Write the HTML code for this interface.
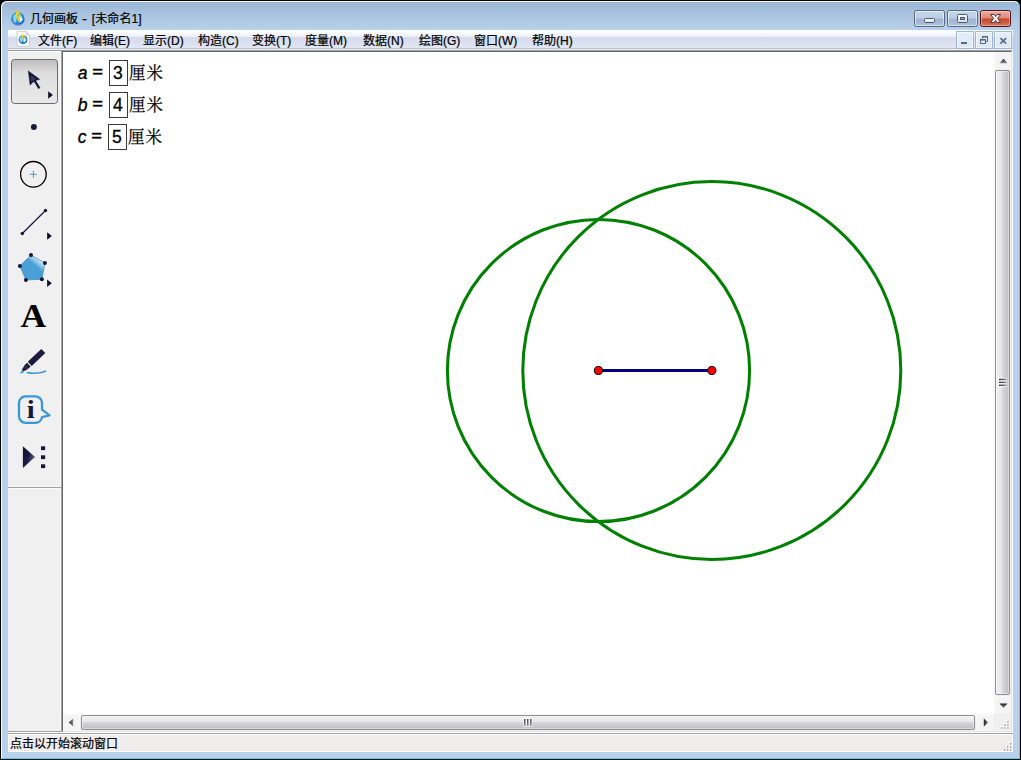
<!DOCTYPE html>
<html lang="zh-CN">
<head>
<meta charset="utf-8">
<title>几何画板 - [未命名1]</title>
<style>
*{box-sizing:border-box;margin:0;padding:0}
html,body{width:1021px;height:760px;overflow:hidden;background:#000}
body{font-family:"Liberation Sans","Noto Sans CJK SC",sans-serif;font-size:12px;color:#000;position:relative}
.abs{position:absolute}
#win{position:absolute;left:0;top:0;width:1021px;height:760px;background:#000;border-radius:7px 7px 0 0;overflow:hidden}
#frame{position:absolute;left:1px;top:1px;width:1019px;height:758px;border-radius:6px 6px 0 0;
 background:linear-gradient(#9ab6d6 0px,#a3bedc 8px,#b0c9e4 20px,#b9d1ea 30px,#b9d1ea 100%);
 }
#frame:before{content:"";position:absolute;left:0;top:0;right:0;bottom:0;border-radius:6px 6px 0 0;
 border-top:1px solid #fdfeff;border-left:1px solid #fdfeff;border-right:1px solid #3fd6f4;border-bottom:1px solid #3fd6f4}
.title{position:absolute;left:30px;top:11px;-webkit-text-stroke:0.2px #000;height:16px;line-height:16px;font-size:12px;white-space:nowrap}
/* caption buttons */
.cb{position:absolute;top:10px;height:17px;border:1px solid #5b687e;border-radius:2.5px;
 background:linear-gradient(#c4d6eb 0%,#bccfe6 48%,#9cb5d3 52%,#abc2dd 100%);box-shadow:inset 0 0 0 1px rgba(255,255,255,.55)}
.cb.close{border-color:#4d121c;background:linear-gradient(#eaa99b 0%,#dc8a78 48%,#c5452a 52%,#d7735c 100%);box-shadow:inset 0 0 0 1px rgba(255,255,255,.35)}
/* menu */
#menubar{position:absolute;left:8px;top:30px;width:1005px;height:19px;
 background:linear-gradient(#ffffff 0px,#ffffff 1px,#e9edf7 7px,#d4daec 7px,#e2e7f5 18px,#bcc2d2 18px,#bcc2d2 19px)}
.mi{position:absolute;top:33px;transform:translateY(0.5px);-webkit-text-stroke:0.2px #000;height:14px;line-height:14px;font-size:12px;white-space:nowrap}
.mdib{position:absolute;top:31px;width:18px;height:18px;border:1px solid #a3b7d0;background:linear-gradient(#e4eefa,#dbe7f6);box-shadow:inset 0 0 0 1px rgba(255,255,255,.55)}
#client{position:absolute;left:8px;top:49px;width:1005px;height:703px;background:#f0f0f0}

.tri{position:absolute;width:0;height:0;border-style:solid}
.thumbv{position:absolute;left:995px;width:15px;border:1px solid #8f8f8f;border-radius:2px;
 background:linear-gradient(90deg,#f3f3f3 0%,#e5e5e7 45%,#d7d7da 50%,#bebec3 100%);box-shadow:inset 0 0 0 1px rgba(255,255,255,.4)}
.thumbh{position:absolute;top:715px;height:15px;border:1px solid #8f8f8f;border-radius:2px;
 background:linear-gradient(#f3f3f3 0%,#e5e5e7 45%,#d7d7da 50%,#bebec3 100%);box-shadow:inset 0 0 0 1px rgba(255,255,255,.4)}
.meas{position:absolute;left:77px;height:26px;line-height:26px;font-size:17.5px;white-space:nowrap;font-family:"Liberation Sans","Noto Serif CJK SC",sans-serif}
.meas i{font-style:italic;display:inline-block;width:15px}
.meas i,.meas b,.meas .u{position:relative;top:-1px}
.meas i{-webkit-text-stroke:0.35px #000;left:0.8px}
.meas .d{position:relative;left:-0.6px;-webkit-text-stroke:0.3px #000}
.meas b{font-weight:normal;-webkit-text-stroke:0.9px #000;display:inline-block;width:17px;transform:translate(0.5px,-1.1px) scaleY(0.8)}
.meas .bx{display:inline-block;width:19px;height:26px;line-height:24px;border:1px solid #3a3a3a;padding:0;margin:0 1.5px 0 0;vertical-align:top;text-align:center}
.meas .u{font-family:"Noto Serif CJK SC","Liberation Serif",serif;font-size:16.5px;letter-spacing:1px;-webkit-text-stroke:0.25px #000;left:-0.5px}
</style>
</head>
<body>
<div id="win">
 <div id="frame"></div>
 <div class="title">几何画板</div><div class="title" style="left:81.5px;transform:scaleX(1.25);transform-origin:0 0">-</div><div class="title" style="left:91.8px;letter-spacing:0.1px">[未命名1]</div>
 <div class="cb" style="left:914px;width:31px"></div>
 <div class="cb" style="left:947px;width:31px"></div>
 <div class="cb close" style="left:980px;width:31px"></div>

 <div id="menubar"></div>
 <div class="mi" style="left:38px">文件(F)</div>
 <div class="mi" style="left:90px">编辑(E)</div>
 <div class="mi" style="left:143px">显示(D)</div>
 <div class="mi" style="left:198px">构造(C)</div>
 <div class="mi" style="left:252px">变换(T)</div>
 <div class="mi" style="left:305px">度量(M)</div>
 <div class="mi" style="left:363px">数据(N)</div>
 <div class="mi" style="left:419px">绘图(G)</div>
 <div class="mi" style="left:474px">窗口(W)</div>
 <div class="mi" style="left:532px">帮助(H)</div>
 <div class="mdib" style="left:956px"></div>
 <div class="mdib" style="left:975px"></div>
 <div class="mdib" style="left:994px"></div>


 <!-- caption & mdi glyphs, app icons -->
 <svg class="abs" style="left:0;top:0" width="1021" height="52" viewBox="0 0 1021 52">
  <defs>
   <radialGradient id="gglobe" cx="0.42" cy="0.38" r="0.65">
    <stop offset="0" stop-color="#6fd0f6"/><stop offset="0.5" stop-color="#229ae2"/><stop offset="1" stop-color="#1363bd"/>
   </radialGradient>
   <linearGradient id="gwhite" x1="0" y1="0" x2="0" y2="1"><stop offset="0" stop-color="#ffffff"/><stop offset="1" stop-color="#dcdcdc"/></linearGradient>
  </defs>
  <!-- min -->
  <rect x="924.5" y="18.5" width="10" height="4" rx="1" fill="url(#gwhite)" stroke="#4c5873" stroke-width="1"/>
  <!-- max -->
  <rect x="957.5" y="14.5" width="10" height="8" rx="1" fill="url(#gwhite)" stroke="#4c5873" stroke-width="1"/>
  <rect x="960.5" y="17.5" width="4" height="2" fill="#8fb0d6" stroke="#4c5873" stroke-width="1"/>
  <!-- close X -->
  <path d="M990.6 14.5 H994.1 L995.6 16.6 L997.1 14.5 H1000.6 L997.5 18.5 L1000.6 22.5 H997.1 L995.6 20.4 L994.1 22.5 H990.6 L993.7 18.5 Z" fill="#fafafa" stroke="#5a3440" stroke-width="1" stroke-linejoin="round"/>
  <!-- mdi min -->
  <rect x="961" y="42" width="6" height="2" fill="#5c6b80"/>
  <!-- mdi restore -->
  <path d="M982.5 38.5 V36.5 H987.5 V41.5 H986" fill="none" stroke="#5c6b80" stroke-width="1"/>
  <rect x="982" y="36" width="6" height="1.6" fill="#5c6b80"/>
  <rect x="980.5" y="39.5" width="5" height="4" fill="none" stroke="#5c6b80" stroke-width="1"/>
  <rect x="980" y="39" width="6" height="1.6" fill="#5c6b80"/>
  <!-- mdi close -->
  <path d="M1000.4 38.2 L1006.2 43.6 M1006.2 38.2 L1000.4 43.6" stroke="#5c6b80" stroke-width="1.7" fill="none"/>
  <!-- app icon -->
  <circle cx="17.9" cy="18.9" r="6.7" fill="url(#gglobe)"/>
  <path d="M12.2 21 C13.4 25.6 20.6 27 24 22.4" fill="none" stroke="#d79ad0" stroke-width="0.9" opacity=".75"/>
  <path d="M14.4 14.6 C12.6 17.4 13.2 21.4 15.4 23.6 C14.6 20.6 14.8 17.4 16.2 14.8 Z" fill="#bfeaff" opacity=".7"/>
  <path d="M19.3 15.6 L23 19.6 L19.7 23 Z" fill="#ffffff" opacity=".9"/>
  <path d="M17 11.2 L15.3 21.8 M17.4 11.6 L18.6 21.2 M17.6 11.6 L21.8 17.6" fill="none" stroke="#ffd91a" stroke-width="1.05" stroke-linecap="round"/>
  <path d="M16.9 11 L17.8 13" stroke="#f3c400" stroke-width="1.4" stroke-linecap="round"/>
  <!-- doc icon -->
  <path d="M17 31.5 H26.2 L29.5 34.8 V46.3 H17 Z" fill="#fbfbfb" stroke="#c4c6cc" stroke-width="0.8"/>
  <path d="M26.2 31.5 V34.8 H29.5" fill="#e8e8ec" stroke="#c4c6cc" stroke-width="0.7"/>
  <circle cx="23" cy="39.7" r="4.4" fill="url(#gglobe)"/>
  <path d="M20.6 37 C19.6 38.8 19.8 41.2 21.2 42.8 C20.8 40.8 21 38.8 21.8 37.2 Z" fill="#bfeaff" opacity=".7"/>
  <path d="M23.9 37.6 L26.3 40.2 L24.1 42.4 Z" fill="#ffffff" opacity=".9"/>
  <path d="M22.4 34.8 L21.3 41.6 M22.6 35 L23.4 41.4 M22.8 35 L25.6 39" fill="none" stroke="#ffd91a" stroke-width="0.85" stroke-linecap="round"/>
 </svg>
 <div id="client"></div>
 <!-- line under menu -->
 <div class="abs" style="left:8px;top:50px;width:1004px;height:1px;background:#a0a0a0"></div>
 <!-- toolbox -->
 <div class="abs" id="toolbox" style="left:8px;top:51px;width:53px;height:680px;background:#f0f0f0;border-top:1px solid #fff"></div>
 <div class="abs" style="left:60px;top:52px;width:1px;height:679px;background:#fafafa"></div>
 <div class="abs" style="left:61px;top:51px;width:1px;height:681px;background:#a0a0a0"></div>
 <div class="abs" style="left:8px;top:731px;width:54px;height:1px;background:#a0a0a0"></div>
 <div class="abs" style="left:8px;top:487px;width:53px;height:1px;background:#a0a0a0"></div>
 <!-- canvas w/ sunken edge -->
 <div class="abs" style="left:62px;top:51px;width:950px;height:681px;background:#fff;border-left:1px solid #696969;border-top:1px solid #696969;border-right:1px solid #e3e3e3;border-bottom:1px solid #e3e3e3"></div>
 <div class="abs" style="left:1012px;top:50px;width:1px;height:683px;background:#fff"></div>
 <div class="abs" style="left:8px;top:732px;width:1005px;height:1px;background:#fff"></div>
 <!-- scrollbars -->
 <div class="abs" id="vsb" style="left:994px;top:52px;width:17px;height:662px;background:linear-gradient(90deg,#fafafa 0px,#efefef 2px,#f0f0f0 100%)"></div>
 <div class="abs" id="hsb" style="left:63px;top:714px;width:931px;height:17px;background:linear-gradient(#fafafa 0px,#efefef 2px,#f0f0f0 100%)"></div>
 <div class="abs" style="left:994px;top:714px;width:17px;height:17px;background:#f0f0f0"></div>
 <!-- status bar -->
 <div class="abs" style="left:8px;top:733px;width:1005px;height:1px;background:#a0a0a0"></div>
 <div class="abs" style="left:8px;top:734px;width:1005px;height:18px;background:#f1ecec;border:1px solid #fff"></div>
 <div class="abs" style="left:10px;top:737px;height:15px;line-height:15px;font-size:12px;white-space:nowrap;-webkit-text-stroke:0.2px #000">点击以开始滚动窗口</div>

 <!-- sketch -->
 <svg class="abs" style="left:63px;top:52px" width="931" height="662" viewBox="63 52 931 662">
  <circle cx="598.5" cy="370.5" r="151.1" fill="none" stroke="#008000" stroke-width="3"/>
  <circle cx="711.8" cy="370.5" r="189" fill="none" stroke="#008000" stroke-width="3"/>
  <line x1="598.4" y1="370.5" x2="711.8" y2="370.5" stroke="#000080" stroke-width="3"/>
  <circle cx="598.4" cy="370.5" r="4.05" fill="#ff0000" stroke="#000" stroke-width="1"/>
  <circle cx="711.9" cy="370.5" r="4.05" fill="#ff0000" stroke="#000" stroke-width="1"/>
 </svg>

 <!-- toolbox icons -->
 <svg class="abs" style="left:8px;top:52px" width="53" height="440" viewBox="8 52 53 440">
  <defs>
   <linearGradient id="gsel" x1="0" y1="0" x2="0" y2="1">
    <stop offset="0" stop-color="#bdbdbd"/><stop offset="0.27" stop-color="#d9d9d9"/><stop offset="0.275" stop-color="#dedede"/><stop offset="1" stop-color="#e9e9e9"/>
   </linearGradient>
   <linearGradient id="gpoly" x1="0.9" y1="0" x2="0.45" y2="0.55">
    <stop offset="0" stop-color="#ffffff"/><stop offset="0.3" stop-color="#dcecf8"/><stop offset="0.72" stop-color="#4a9fd6"/><stop offset="1" stop-color="#4a9fd6"/>
   </linearGradient>
   <linearGradient id="gplay" x1="0" y1="0" x2="1" y2="0.6">
    <stop offset="0" stop-color="#14122f"/><stop offset="0.55" stop-color="#1c1a3f"/><stop offset="0.85" stop-color="#55547a"/><stop offset="1" stop-color="#1c1a3f"/>
   </linearGradient>
  </defs>
  <rect x="11.5" y="59.5" width="46" height="44" rx="3" ry="3" fill="url(#gsel)" stroke="#6b6b6b" stroke-width="1"/>
  <!-- arrow -->
  <path d="M28.3 70.9 L39.7 79.3 L34.4 80.9 L30.1 85.1 Z" fill="#17153a" stroke="#17153a" stroke-width="0.5" stroke-linejoin="round"/>
  <path d="M30.6 75.2 L36.6 79.2 L33.4 80.2 L31.2 82.6 Z" fill="#5d5b80" opacity=".5"/>
  <path d="M34.2 80 L39.4 88.3" stroke="#17153a" stroke-width="2.3" fill="none"/>
  <path d="M48.2 91.2 L52.9 95 L48.2 98.8 Z" fill="#0f0c2e"/>
  <!-- point -->
  <circle cx="33.9" cy="127" r="3" fill="#1a1840"/>
  <!-- circle -->
  <circle cx="33.4" cy="174.3" r="12.8" fill="none" stroke="#000" stroke-width="1.3"/>
  <path d="M29.8 174.3 H37 M33.4 170.7 V177.9" stroke="#3d8fd0" stroke-width="0.9" fill="none"/>
  <!-- line -->
  <line x1="22.3" y1="233.5" x2="45.5" y2="210.5" stroke="#17153a" stroke-width="1.2"/>
  <circle cx="22.3" cy="233.5" r="1.7" fill="#17153a"/><circle cx="45.5" cy="210.5" r="1.7" fill="#17153a"/>
  <path d="M47.1 232.2 L51.8 236 L47.1 239.8 Z" fill="#0f0c2e"/>
  <!-- polygon -->
  <path d="M31 255.1 L44.9 263 L41.9 279.3 L25.9 279.9 L19.9 266 Z" fill="url(#gpoly)" stroke="#3f93cc" stroke-width="0.8"/>
  <g fill="#17153a"><circle cx="31" cy="255.1" r="2"/><circle cx="44.9" cy="263" r="2"/><circle cx="41.9" cy="279.3" r="2"/><circle cx="25.9" cy="279.9" r="2"/><circle cx="19.9" cy="266" r="2"/></g>
  <path d="M47.1 279.4 L51.8 283.2 L47.1 287 Z" fill="#0f0c2e"/>
  <!-- text tool -->
  <text transform="translate(33.4 327) scale(1.05 1)" x="0" y="0" text-anchor="middle" font-family="Liberation Serif, serif" font-weight="bold" font-size="33.8" fill="#000">A</text>
  <!-- marker -->
  <g transform="translate(21.6 371.6) rotate(-43.5)">
   <path d="M0 0 L3 -1.7 L6 -2.3 L6 2.3 L3 1.7 Z" fill="#1c1a3d"/>
   <rect x="6" y="-2.6" width="4.0" height="5.2" fill="#1c1a3d"/>
   <rect x="11.3" y="-2.9" width="18.6" height="5.8" fill="#1c1a3d"/>
  </g>
  <path d="M20.3 372.9 L22.9 370.4 L23.4 372.4 Z" fill="#3d97d3" stroke="#3d97d3" stroke-width="0.8"/>
  <path d="M27.4 372.6 C33 373.6 40 373.4 45.5 371.2" fill="none" stroke="#3d97d3" stroke-width="1.6" stroke-linecap="round"/>
  <!-- info -->
  <path d="M25.5 396.4 H35.5 A6.6 6.6 0 0 1 42 403 V409.6 L49.6 415.4 L42 417.2 A6.6 6.6 0 0 1 35.5 422.8 H25.5 A6.6 6.6 0 0 1 19 416.2 V403 A6.6 6.6 0 0 1 25.5 396.4 Z" fill="none" stroke="#3d97d3" stroke-width="2.3" stroke-linejoin="round"/>
  <text transform="translate(30.8 418) scale(1.15 1)" x="0" y="0" text-anchor="middle" font-family="Liberation Serif, serif" font-weight="bold" font-size="24.8" fill="#17153a">i</text>
  <!-- custom tool -->
  <path d="M22.9 446.3 L35 457.1 L22.9 468 Z" fill="url(#gplay)"/>
  <g fill="#17153a"><rect x="41" y="446.3" width="4.2" height="3.8"/><rect x="41" y="455.3" width="4.2" height="3.8"/><rect x="41" y="464.3" width="4.2" height="3.8"/></g>
 </svg>
 <div class="abs" style="left:8px;top:488px;width:53px;height:1px;background:#fbfbfb"></div>
 <div class="abs" style="left:8px;top:486px;width:53px;height:1px;background:#f8f8f8"></div>

 <!-- scrollbar parts -->

 <!-- scroll arrow buttons -->
 <svg class="abs" style="left:63px;top:52px" width="948" height="679" viewBox="63 52 948 679">
  <defs>
   <linearGradient id="gaD" x1="0" y1="0" x2="0" y2="1"><stop offset="0" stop-color="#1c1c1c"/><stop offset="1" stop-color="#8c8c8c"/></linearGradient>
   <linearGradient id="gaR" x1="0" y1="0" x2="1" y2="0"><stop offset="0" stop-color="#1c1c1c"/><stop offset="1" stop-color="#8c8c8c"/></linearGradient>
   <linearGradient id="gaL" x1="1" y1="0" x2="0" y2="0"><stop offset="0" stop-color="#8c8c8c"/><stop offset="1" stop-color="#1c1c1c"/></linearGradient>
  </defs>
  <g fill="#f4f4f4" stroke="#f8f8f8" stroke-width="1">
   <rect x="995.5" y="52.5" width="15" height="16"/><rect x="995.5" y="696.5" width="15" height="16"/>
   <rect x="63.5" y="715.5" width="16" height="15"/><rect x="976.5" y="715.5" width="16" height="15"/>
  </g>
  <path d="M999.5 63.2 L1003.5 58.8 L1007.5 63.2 Z" fill="url(#gaD)"/>
  <path d="M999.5 703.6 L1007.5 703.6 L1003.5 708 Z" fill="url(#gaD)"/>
  <path d="M73.2 718.6 L73.2 726.6 L68.8 722.6 Z" fill="url(#gaL)"/>
  <path d="M983.8 718.6 L988.2 722.6 L983.8 726.6 Z" fill="url(#gaR)"/>
 </svg>
 <div class="thumbv" style="top:70px;height:625px"></div>
 <div class="thumbh" style="left:81px;width:894px"></div>
 <svg class="abs" style="left:994px;top:369.5px" width="17" height="24"><defs><linearGradient id="gg1" x1="0" y1="0" x2="1" y2="0"><stop offset="0" stop-color="#2a2a2a"/><stop offset="1" stop-color="#8a8a8a"/></linearGradient></defs><rect x="4" y="7.8" width="9" height="9.4" rx="1" fill="#fff" opacity=".55"/><g fill="url(#gg1)"><rect x="5" y="8.8" width="7.4" height="1.3"/><rect x="5" y="11.7" width="7.4" height="1.3"/><rect x="5" y="14.6" width="7.4" height="1.3"/></g></svg>
 <svg class="abs" style="left:516px;top:714px" width="24" height="17"><defs><linearGradient id="gg2" x1="0" y1="0" x2="0" y2="1"><stop offset="0" stop-color="#2a2a2a"/><stop offset="1" stop-color="#8a8a8a"/></linearGradient></defs><rect x="7" y="4" width="9.6" height="9" rx="1" fill="#fff" opacity=".55"/><g fill="url(#gg2)"><rect x="8.1" y="5" width="1.3" height="7"/><rect x="11.1" y="5" width="1.3" height="7"/><rect x="14.2" y="5" width="1.3" height="7"/></g></svg>
 <!-- size grips -->
 <svg class="abs" style="left:990px;top:710px" width="24" height="44" viewBox="990 710 24 44"><g fill="#ffffff"><rect x="1006.3" y="726.2" width="1.2" height="1.2"/><rect x="1003.3" y="726.2" width="1.2" height="1.2"/><rect x="1000.3" y="726.2" width="1.2" height="1.2"/><rect x="1006.3" y="723.2" width="1.2" height="1.2"/><rect x="1003.3" y="723.2" width="1.2" height="1.2"/><rect x="1006.3" y="720.2" width="1.2" height="1.2"/></g><g fill="#9a9a9a"><rect x="1007.3" y="727.2" width="1.2" height="1.6"/><rect x="1004.3" y="727.2" width="1.2" height="1.6"/><rect x="1001.3" y="727.2" width="1.2" height="1.6"/><rect x="1007.3" y="724.2" width="1.2" height="1.6"/><rect x="1004.3" y="724.2" width="1.2" height="1.6"/><rect x="1007.3" y="721.2" width="1.2" height="1.6"/></g><g fill="#ffffff"><rect x="1009" y="748" width="1.2" height="1.2"/><rect x="1006" y="748" width="1.2" height="1.2"/><rect x="1003" y="748" width="1.2" height="1.2"/><rect x="1009" y="745" width="1.2" height="1.2"/><rect x="1006" y="745" width="1.2" height="1.2"/><rect x="1009" y="742" width="1.2" height="1.2"/></g><g fill="#9a9a9a"><rect x="1010" y="749" width="1.2" height="1.6"/><rect x="1007" y="749" width="1.2" height="1.6"/><rect x="1004" y="749" width="1.2" height="1.6"/><rect x="1010" y="746" width="1.2" height="1.6"/><rect x="1007" y="746" width="1.2" height="1.6"/><rect x="1010" y="743" width="1.2" height="1.6"/></g></svg>

 <!-- measurements -->
 <div class="meas" style="top:60px"><i>a</i><b>=</b><span class="bx"><span class="d">3</span></span><span class="u">厘米</span></div>
 <div class="meas" style="top:92px"><i>b</i><b>=</b><span class="bx"><span class="d">4</span></span><span class="u">厘米</span></div>
 <div class="meas" style="top:124px"><i style="width:14px">c</i><b>=</b><span class="bx"><span class="d">5</span></span><span class="u">厘米</span></div>
</div>
</body>
</html>
